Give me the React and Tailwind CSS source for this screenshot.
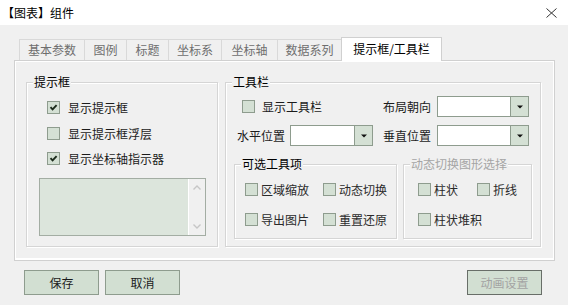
import { useState } from "react";

const tabs = [
    { name: "基本参数", w: "w-[65px]" },
    { name: "图例", w: "w-[42px]" },
    { name: "标题", w: "w-[42px]" },
    { name: "坐标系", w: "w-[53px]" },
    { name: "坐标轴", w: "w-[56px]" },
    { name: "数据系列", w: "w-[64px]" },
];

const CheckBox = ({ checked }) => (
    <span className="flex h-[13px] w-[13px] shrink-0 items-center justify-center border border-[#8e9c8e] bg-[#d4e0d4]">
        {checked && (
            <svg width="9" height="9" viewBox="0 0 9 9">
                <path d="M1.5 4.2 L3.6 6.4 L7.6 2.2" stroke="#1b2a1b" strokeWidth="1.9" fill="none" />
            </svg>
        )}
    </span>
);

const Select = ({ className }) => (
    <div className={`flex h-[21px] border border-[#8e9c8e] bg-white ${className}`}>
        <div className="flex-1" />
        <div className="flex w-[18px] items-center justify-center border-l border-[#8e9c8e] bg-[#d4e0d4]">
            <svg width="6" height="4" viewBox="0 0 6 4">
                <path d="M0 0.5 H6 L3 3.5 Z" fill="#111" />
            </svg>
        </div>
    </div>
);

const Group = ({ label, className, labelClass = "text-black", children }) => (
    <div className={`relative border border-[#d5d5d5] shadow-[1px_1px_0_#fff,inset_1px_1px_0_#fff] ${className}`}>
        <span className={`absolute -top-[8px] left-[6px] whitespace-nowrap bg-[#f0f0f0] px-[1px] text-[12px] leading-[14px] ${labelClass}`}>
            {label}
        </span>
        {children}
    </div>
);

const Option = ({ label, checked }) => (
    <div className="flex h-[13px] items-center gap-[3px] whitespace-nowrap text-[12px] leading-[14px] text-[#2a2a2a]">
        <CheckBox checked={checked} />
        <span>{label}</span>
    </div>
);

const Button = ({ children, disabled }) => (
    <button
        className={`flex h-[25px] w-[75px] items-center justify-center border text-[12px] leading-[14px] ${
            disabled ? "border-[#686e68] bg-[#d2dfd2] text-[#a3a3a3]" : "border-[#8e9c8e] bg-[#d2dfd2] text-[#1b1b1b]"
        }`}
    >
        {children}
    </button>
);

export default function App() {
    const [tipChecks] = useState([
        { label: "显示提示框", checked: true },
        { label: "显示提示框浮层", checked: false },
        { label: "显示坐标轴指示器", checked: true },
    ]);

    return (
        <div className="h-[305px] w-[568px] overflow-hidden bg-[#f0f0f0] font-['Noto_Sans_CJK_SC',sans-serif] text-[12px] text-[#1b1b1b]">
            {/* title bar */}
            <div className="flex h-[25px] items-center justify-between bg-white pl-[2px] pr-[11px]">
                <span className="text-[12px] leading-[14px] text-black">【图表】组件</span>
                <svg width="11" height="10" viewBox="0 0 11 10">
                    <path d="M0.5 0.5 L10.5 9.5 M10.5 0.5 L0.5 9.5" stroke="#333" strokeWidth="1" />
                </svg>
            </div>

            {/* tabs */}
            <div className="relative z-10 mt-[12px] flex h-[24px] pl-[19px]">
                {tabs.map((t) => (
                    <div
                        key={t.name}
                        className={`mt-[2px] flex h-[21px] items-center justify-center border-l border-t border-[#d9d9d9] text-[12px] leading-[14px] text-[#6e6e6e] ${t.w}`}
                    >
                        {t.name}
                    </div>
                ))}
                <div className="flex h-[24px] w-[101px] items-center justify-center border-x border-t border-[#d0d0d0] bg-white pb-[2px] text-[12px] leading-[14px] text-black">
                    提示框/工具栏
                </div>
            </div>

            {/* tab panel */}
            <div className="-mt-px ml-[14px] flex h-[201px] w-[541px] gap-[7px] border border-[#d0d0d0] pl-[11px] pt-[21px] shadow-[inset_1px_1px_0_#fff,inset_-1px_-2px_0_#fff]">
                <Group label="提示框" className="h-[165px] w-[192px] pl-[12px] pt-[18px]">
                    <div className="flex flex-col pl-[8px]">
                        {tipChecks.map((c, i) => (
                            <div
                                key={c.label}
                                className={`flex h-[13px] items-center gap-[8px] whitespace-nowrap text-[12px] leading-[14px] text-[#1b1b1b] ${
                                    i === 1 ? "mt-[13px]" : i === 2 ? "mt-[12px]" : ""
                                }`}
                            >
                                <CheckBox checked={c.checked} />
                                <span>{c.label}</span>
                            </div>
                        ))}
                    </div>
                    <div className="mt-[13px] flex h-[58px] w-[167px] border border-[#a3ada3] bg-[#dce5dc]">
                        <div className="flex-1" />
                        <div className="flex w-[17px] flex-col items-center justify-between border-l border-white bg-[#f0f0f0] py-[6px]">
                            <svg width="8" height="5" viewBox="0 0 8 5">
                                <path d="M0.5 4.5 L4 1 L7.5 4.5" stroke="#c6c6c6" strokeWidth="1.4" fill="none" />
                            </svg>
                            <svg width="8" height="5" viewBox="0 0 8 5">
                                <path d="M0.5 0.5 L4 4 L7.5 0.5" stroke="#c6c6c6" strokeWidth="1.4" fill="none" />
                            </svg>
                        </div>
                    </div>
                </Group>

                <Group label="工具栏" className="h-[165px] w-[316px] pl-[8px] pt-[13px]">
                    <div className="flex h-[21px] items-center whitespace-nowrap pl-[3px] text-[12px] leading-[14px]">
                        <div className="flex w-[146px] items-center gap-[7px] pl-[5px]">
                            <CheckBox checked={false} />
                            <span>显示工具栏</span>
                        </div>
                        <span className="w-[54px]">布局朝向</span>
                        <Select className="w-[92px]" />
                    </div>
                    <div className="mt-[8px] flex h-[21px] items-center whitespace-nowrap pl-[3px] text-[12px] leading-[14px]">
                        <span className="w-[53px]">水平位置</span>
                        <Select className="w-[83px]" />
                        <span className="ml-[10px] w-[54px]">垂直位置</span>
                        <Select className="w-[92px]" />
                    </div>
                    <div className="mt-[18px] flex gap-[6px]">
                        <Group label="可选工具项" className="h-[75px] w-[163px] pl-[10px] pt-[18px]">
                            <div className="grid grid-cols-[78px_78px] gap-y-[17px]">
                                <Option label="区域缩放" />
                                <Option label="动态切换" />
                                <Option label="导出图片" />
                                <Option label="重置还原" />
                            </div>
                        </Group>
                        <Group
                            label="动态切换图形选择"
                            labelClass="text-[#a5a5a5]"
                            className="h-[75px] w-[129px] pl-[14px] pt-[18px]"
                        >
                            <div className="grid grid-cols-[59px_59px] gap-y-[17px]">
                                <Option label="柱状" />
                                <Option label="折线" />
                                <Option label="柱状堆积" />
                            </div>
                        </Group>
                    </div>
                </Group>
            </div>

            {/* buttons */}
            <div className="mt-[9px] flex gap-[6px] pl-[24px] pr-[26px]">
                <Button>保存</Button>
                <Button>取消</Button>
                <div className="ml-auto">
                    <Button disabled>动画设置</Button>
                </div>
            </div>
        </div>
    );
}
